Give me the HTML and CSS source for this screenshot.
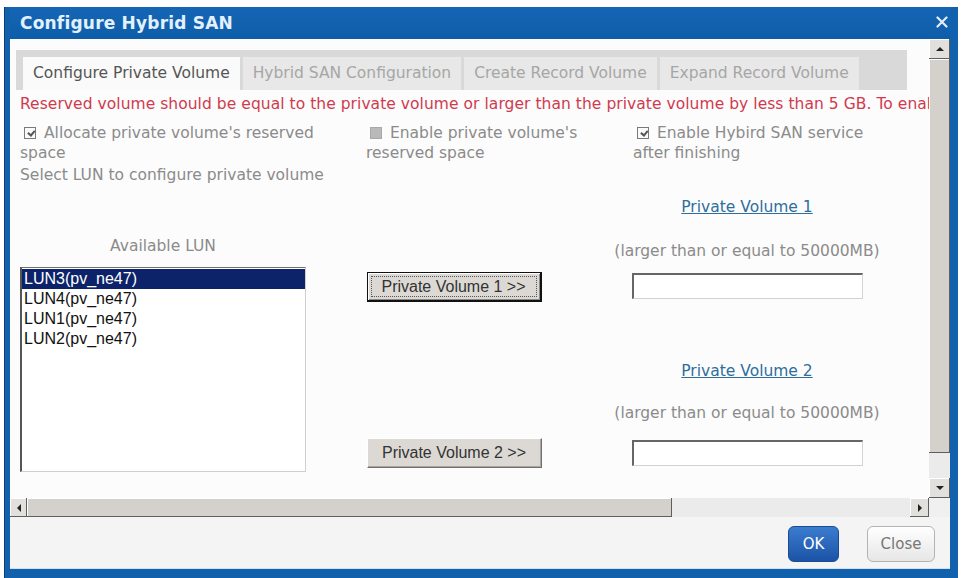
FILE: index.html
```html
<!DOCTYPE html>
<html>
<head>
<title>Configure Hybrid SAN</title>
<meta charset="utf-8">
<link rel="stylesheet" href="styles.css">
</head>
<body>
<div id="dialog">
<div class="titlebar">
<span class="title">Configure Hybrid SAN</span>
<a class="close" title="Close"><svg width="12" height="12" viewBox="0 0 12 12"><path d="M1.5 1.5l9 9M10.5 1.5l-9 9" stroke="#e4eefa" stroke-width="2.2" stroke-linecap="round"/></svg></a>
</div>
<div class="frame">
<div class="viewport">
<ul class="tabs">
<li class="active">Configure Private Volume</li>
<li>Hybrid SAN Configuration</li>
<li>Create Record Volume</li>
<li>Expand Record Volume</li>
</ul>
<div class="pane">
<p class="warn">Reserved volume should be equal to the private volume or larger than the private volume by less than 5 GB. To enable the reserved space, select the check box below.</p>
<div class="options">
<label><span class="chk on"></span>Allocate private volume's reserved space</label>
<label><span class="chk off"></span>Enable private volume's reserved space</label>
<label class="last"><span class="chk on"></span>Enable Hybird SAN service after finishing</label>
</div>
<p class="hint">Select LUN to configure private volume</p>
<div class="layout">
<div class="col lun">
<div class="caption">Available LUN</div>
<div class="listbox">
<div class="item sel">LUN3(pv_ne47)</div>
<div class="item">LUN4(pv_ne47)</div>
<div class="item">LUN1(pv_ne47)</div>
<div class="item">LUN2(pv_ne47)</div>
</div>
</div>
<div class="col moves">
<button class="btn focus first">Private Volume 1 &gt;&gt;</button>
<button class="btn second">Private Volume 2 &gt;&gt;</button>
</div>
<div class="col volumes">
<a class="vol v1">Private Volume 1</a>
<div class="limit l1">(larger than or equal to 50000MB)</div>
<input type="text" class="size s1">
<a class="vol v2">Private Volume 2</a>
<div class="limit l2">(larger than or equal to 50000MB)</div>
<input type="text" class="size s2">
</div>
</div>
</div>
</div>
<div class="vscroll">
<div class="arrow"><i class="up"></i></div>
<div class="thumb"></div>
<div class="track"></div>
<div class="arrow"><i class="down"></i></div>
</div>
<div class="hscroll">
<div class="arrow left-arrow"><i class="left"></i></div>
<div class="thumb"></div>
<div class="track"></div>
<div class="arrow right-arrow"><i class="right"></i></div>
</div>
<div class="corner"></div>
<div class="footer">
<button class="ok">OK</button>
<button class="cancel">Close</button>
</div>
</div>
</div>
</body>
</html>
```

FILE: styles.css
```css
body{margin:0;background:#fff;font-family:"DejaVu Sans",Verdana,sans-serif;}
#dialog{margin:7px 0 0 4px;width:954px;height:571px;box-sizing:border-box;padding:0 8px 10px 5px;background:#1161ad;border-left:1px solid #0b3f78;display:flex;flex-direction:column;}

.titlebar{height:32px;flex:none;display:flex;align-items:center;justify-content:space-between;padding-left:10px;background:linear-gradient(#1466b4,#0f5da9);}
.title{color:#e3f1ff;font-weight:bold;font-size:17px;letter-spacing:.2px;}
.close{display:flex;margin-right:2px;margin-top:-3px;cursor:pointer;}

.frame{flex:1;display:grid;grid-template-columns:919px 21px;grid-template-rows:459px 19px 51px;background:#fcfcfc;border-bottom:1px solid #cfe1f3;}
.viewport{overflow:hidden;padding-top:11px;box-sizing:border-box;}

/* tab strip */
.tabs{margin:0 0 0 6px;padding:7px 0 0 7px;list-style:none;display:flex;gap:3px;width:891px;height:40px;box-sizing:border-box;background:#d9d9d9;}
.tabs li{height:33px;padding:0 10px;line-height:33px;background:#e8e8e8;color:#a6a6a6;font-size:15.5px;white-space:nowrap;}
.tabs li.active{background:#fafafa;color:#555;}

.pane{padding-left:10px;color:#8b8b8b;font-size:15.5px;}
.warn{margin:4px 0 0;line-height:20px;color:#d03a4e;white-space:nowrap;letter-spacing:.05px;}
.options{display:grid;grid-template-columns:346px 267px 255px;margin-top:9px;line-height:20px;}
.options label{padding-right:20px;}
.options label.last{padding-right:0;}
.chk{display:inline-block;width:10px;height:10px;margin:0 8px 0 4px;border:1px solid #7a7a7a;background:#fafafa;vertical-align:-1px;position:relative;}
.chk.on::after{content:"";position:absolute;left:2px;top:0;width:5px;height:3px;border-left:2px solid #555;border-bottom:2px solid #555;transform:rotate(-50deg) translate(-1px,2px);}
.chk.off{background:#b9b9b9;border-color:#a8a8a8;}
.hint{margin:2px 0 0;line-height:20px;}

/* LUN selection */
.layout{display:grid;grid-template-columns:286px 296px 290px;}
.col{display:flex;flex-direction:column;align-items:center;}
.lun{padding-top:51px;}
.caption{line-height:20px;}
.listbox{margin-top:11px;width:286px;height:205px;box-sizing:border-box;padding-top:1px;background:#fff;border-top:1px solid #6d6d6d;border-left:2px solid #555;border-right:1px solid #cfcfcf;border-bottom:1px solid #cfcfcf;font-family:"Liberation Sans",Arial,sans-serif;font-size:16px;color:#111;}
.item{line-height:20px;padding-left:2px;}
.item.sel{background:#0c2369;color:#fff;}

.btn{width:175px;height:30px;padding:0;font-family:"Liberation Sans",Arial,sans-serif;font-size:16px;color:#333;background:#dcd9d4;border:1px solid;border-color:#fff #707070 #707070 #fff;box-shadow:inset -1px -1px #a9a6a0;}
.btn.first{margin-top:87px;}
.btn.second{margin-top:136px;}
.btn.focus{border:1px solid #111;border-right-width:2px;border-bottom-width:2px;box-shadow:inset 1px 1px #fff,inset -1px -1px #8d8a85;position:relative;}
.btn.focus::after{content:"";position:absolute;left:3px;top:3px;right:3px;bottom:3px;border:1px dotted #555;}

.vol{color:#2e6e9c;text-decoration:underline;line-height:20px;cursor:pointer;}
.limit{line-height:20px;}
.size{width:231px;height:26px;box-sizing:border-box;padding:0 4px;background:#fff;border-top:2px solid #666;border-left:2px solid #666;border-right:1px solid #d2d2d2;border-bottom:1px solid #d2d2d2;}
.v1{margin-top:12px;}
.l1{margin-top:24px;}
.s1{margin-top:12px;}
.v2{margin-top:62px;}
.l2{margin-top:22px;}
.s2{margin-top:17px;}

/* scrollbars */
.vscroll{display:flex;flex-direction:column;background:#ececec;}
.hscroll{display:flex;background:#ececec;}
.arrow{flex:none;display:flex;align-items:center;justify-content:center;background:#e2e0dc;box-shadow:inset -1px -1px #5e5e5e,inset 1px 1px #fff;}
.vscroll .arrow{height:20px;}
.hscroll .left-arrow{width:17px;}
.hscroll .right-arrow{width:19px;}
.vscroll .thumb{height:394px;flex:none;background:#d4d1cc;box-shadow:inset -1px -1px #5e5e5e,inset 1px 1px #fff;}
.hscroll .thumb{width:645px;flex:none;background:#d4d1cc;box-shadow:inset -1px -1px #5e5e5e,inset 1px 1px #fff;}
.track{flex:1;background:#ebebeb;}
.arrow i{width:0;height:0;border:4px solid transparent;}
.arrow .up{border-bottom-color:#222;margin-top:-4px;}
.arrow .down{border-top-color:#222;margin-bottom:-4px;}
.arrow .left{border-right-color:#222;margin-left:-4px;}
.arrow .right{border-left-color:#222;margin-right:-4px;}
.corner{background:#f0f0f0;}

.footer{grid-column:1 / span 2;display:flex;justify-content:flex-end;align-items:flex-start;gap:28px;padding:9px 15px 0 0;background:#f4f4f4;}
.footer button{height:36px;border-radius:6px;font-family:"DejaVu Sans",Verdana,sans-serif;font-size:15px;cursor:pointer;}
.ok{width:51px;color:#fff;background:linear-gradient(#3b7ccf,#1b53a6);border:1px solid #1a4b94;}
.cancel{width:68px;height:35px;color:#777;background:linear-gradient(#fff,#e6e6e6);border:1px solid #b3b3b3;}
```
